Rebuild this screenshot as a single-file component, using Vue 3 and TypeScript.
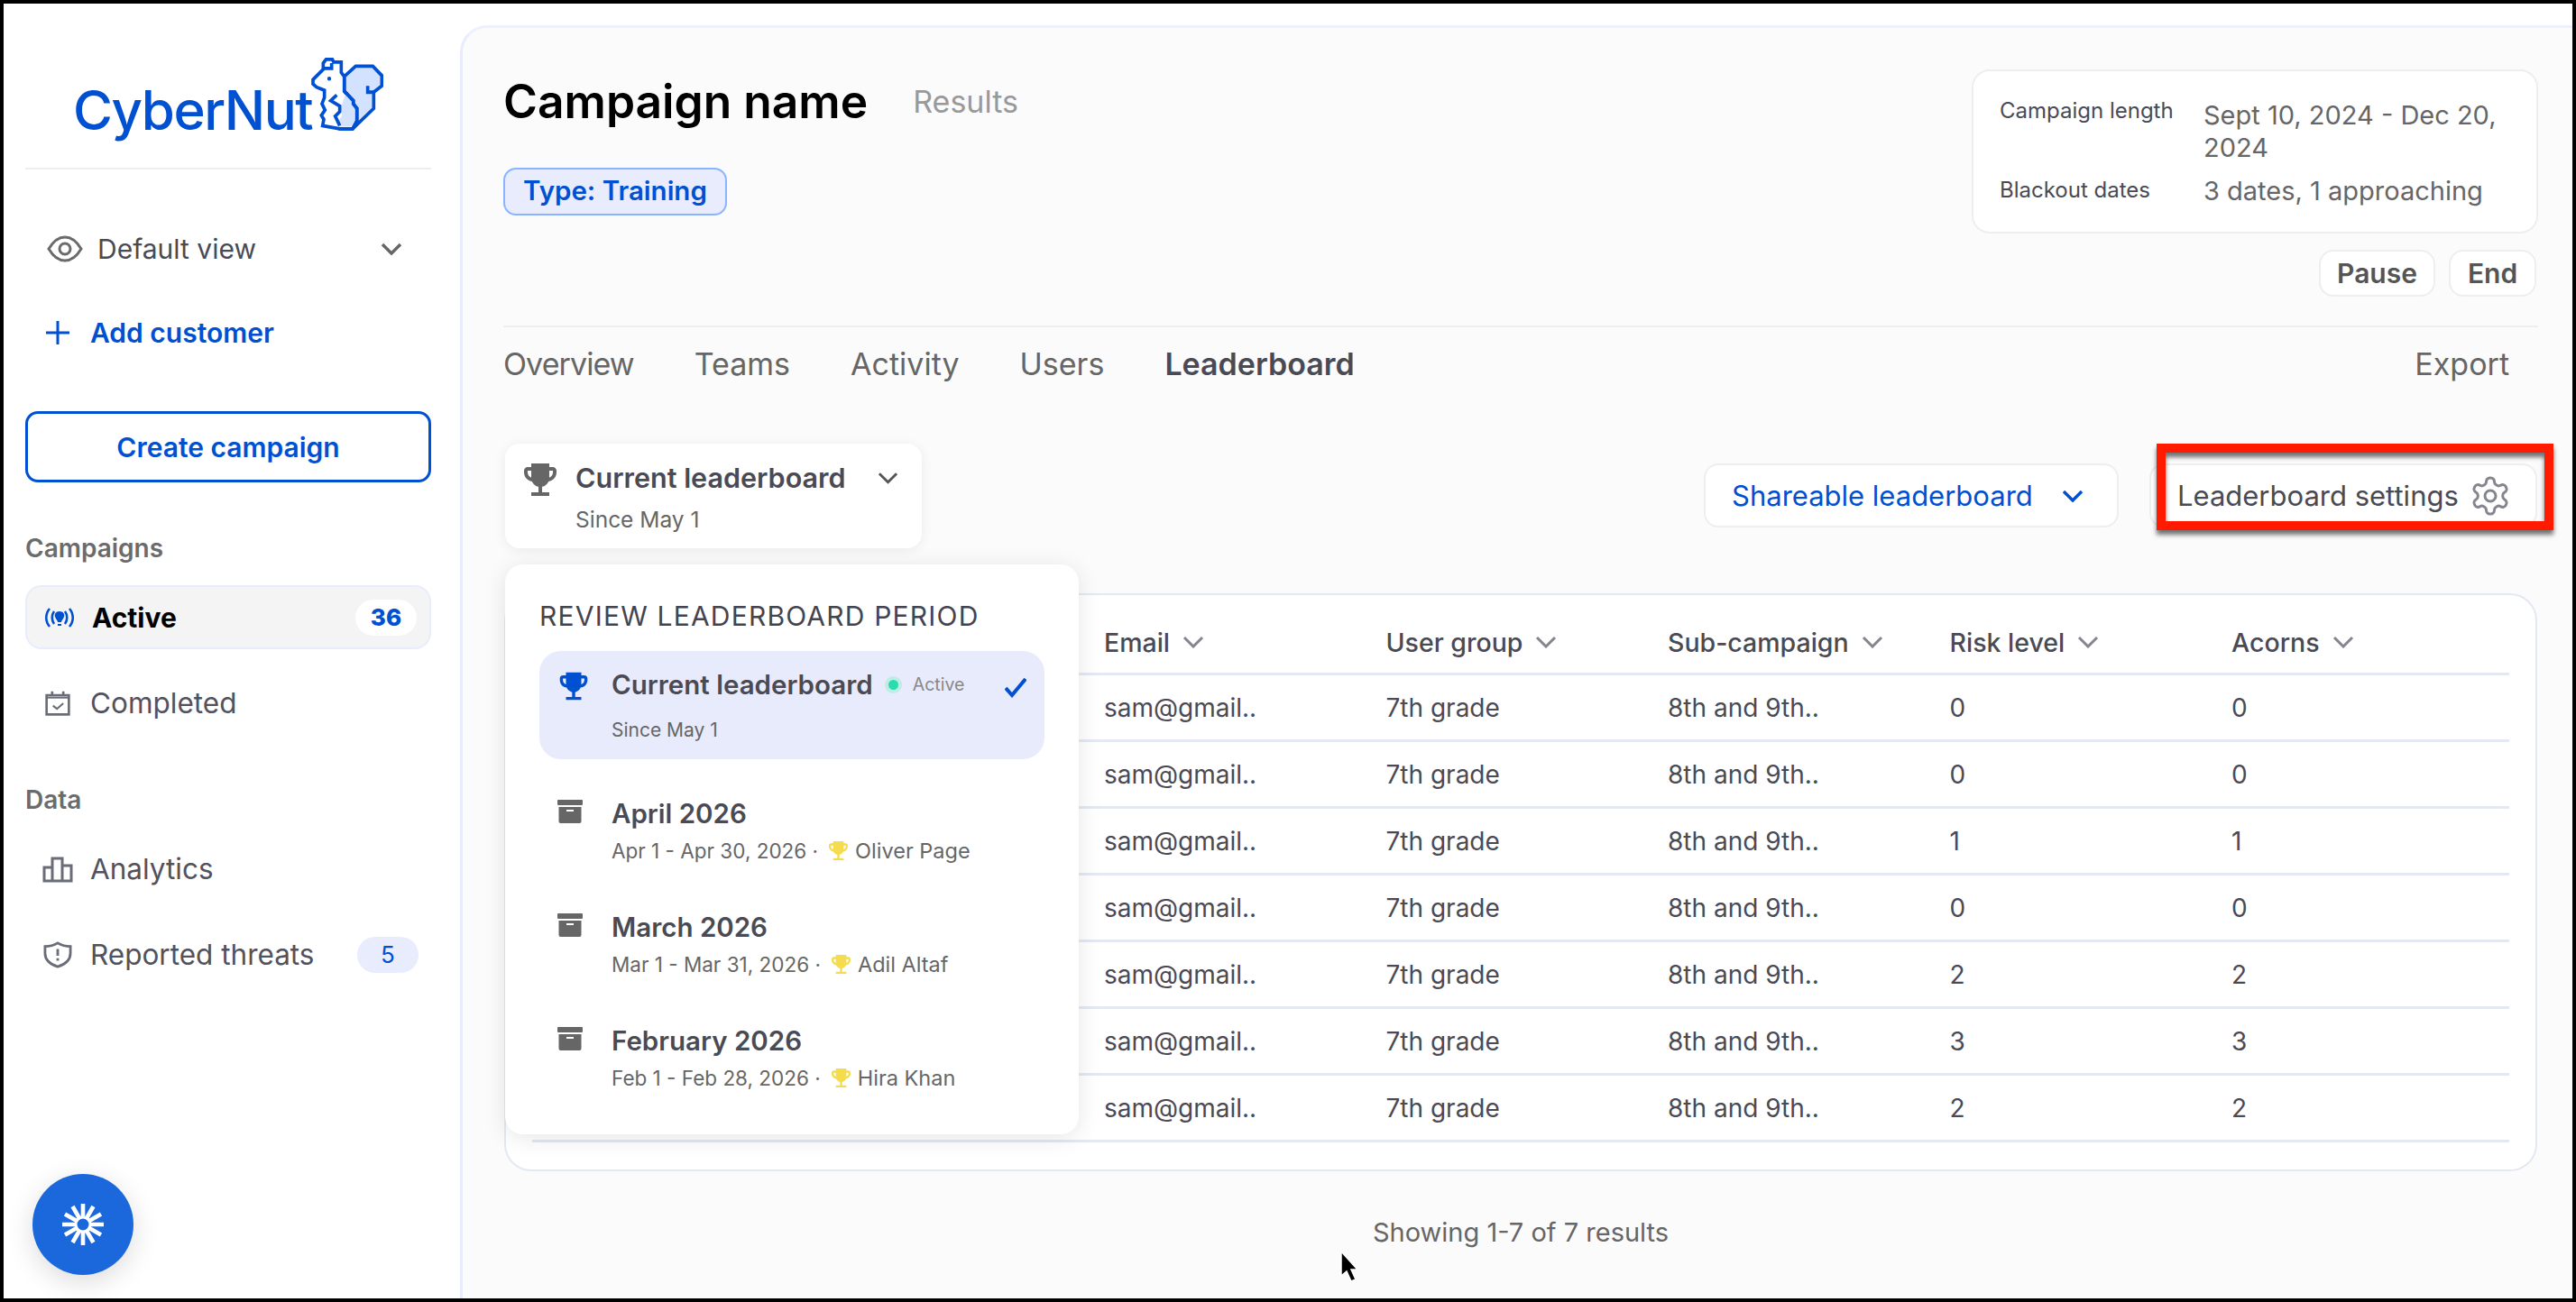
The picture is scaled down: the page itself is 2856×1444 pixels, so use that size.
<script setup lang="ts">
const tabs = ['Overview', 'Teams', 'Activity', 'Users']
const columns = ['Email', 'User group', 'Sub-campaign', 'Risk level', 'Acorns']
const scores = [0, 0, 1, 0, 2, 3, 2]

const periods = [
  { title: 'April 2026', range: 'Apr 1 - Apr 30, 2026 ·', winner: 'Oliver Page' },
  { title: 'March 2026', range: 'Mar 1 - Mar 31, 2026 ·', winner: 'Adil Altaf' },
  { title: 'February 2026', range: 'Feb 1 - Feb 28, 2026 ·', winner: 'Hira Khan' }
]

const trophy =
  'M19 5h-2V3H7v2H5c-1.1 0-2 .9-2 2v1c0 2.55 1.92 4.63 4.39 4.94.63 1.5 1.98 2.63 3.61 2.96V19H7v2h10v-2h-4v-3.1c1.63-.33 2.98-1.46 3.61-2.96C19.08 12.63 21 10.55 21 8V7c0-1.1-.9-2-2-2zM5 8V7h2v3.82C5.84 10.4 5 9.3 5 8zm14 0c0 1.3-.84 2.4-2 2.82V7h2v1z'
</script>

<template>
  <div class="frame">
    <aside class="sidebar">
      <div class="logo">
        <span class="logo-text">CyberNut</span>
        <svg class="squirrel" viewBox="1030 178 240 236" preserveAspectRatio="none" fill="none" stroke="#0050d2" stroke-width="11" stroke-linejoin="miter">
          <path fill="#d3e2ff" d="M1140 238 L1178 205 H1235 L1265 235 V268 L1238 288 V340 L1168 405 H1125 L1112 385 L1128 360 L1120 340 L1140 285 Z" />
          <path fill="#fff" d="M1070 215 V195 L1080 183 H1100 L1105 192 H1130 V225 L1140 238 V285 L1170 315 V325 L1182 340 V380 L1168 405 H1125 L1068 395 L1072 375 L1064 362 L1076 345 L1066 325 L1074 305 V282 L1048 272 L1036 262 V248 Z" />
          <path fill="#d3e2ff" stroke="none" d="M1146 290 L1165 318 V328 L1176 342 V378 L1162 398 H1128 L1118 385 L1133 362 L1128 340 Z" />
          <path d="M1140 285 L1170 315 V325 L1182 340 V380 L1168 405" />
          <path d="M1115 297 L1095 315 L1125 332 V350 L1110 365 L1125 395" />
          <path d="M1072 212 H1098 V195" />
          <path d="M1218 268 V288 H1238" />
          <circle cx="1090" cy="245" r="9" fill="#0050d2" stroke="#fff" stroke-width="5" />
        </svg>
      </div>

      <div class="view-row">
        <svg class="eye" viewBox="0 0 40 30" fill="none" stroke="#6b6b6b" stroke-width="3">
          <path d="M2 15 C8 5 14 2 20 2 S32 5 38 15 C32 25 26 28 20 28 S8 25 2 15 Z" />
          <circle cx="20" cy="15" r="6" />
        </svg>
        <span>Default view</span>
        <svg class="view-chevron" viewBox="0 0 24 14" fill="none" stroke="#666" stroke-width="3.4">
          <path d="M2 2 L12 12 L22 2" />
        </svg>
      </div>

      <div class="add-row">
        <svg class="plus" viewBox="0 0 26 26" fill="none" stroke="#0050d2" stroke-width="3">
          <path d="M13 0 V26 M0 13 H26" />
        </svg>
        <span>Add customer</span>
      </div>

      <button class="create-btn">Create campaign</button>

      <div class="nav-label campaigns-label">Campaigns</div>
      <div class="nav-item active">
        <svg class="nav-icon" viewBox="0 0 34 24" fill="none" stroke="#0050d2" stroke-width="2.6">
          <path d="M6 2 C1 8 1 16 6 22 M11 5 C8 9 8 15 11 19 M28 2 C33 8 33 16 28 22 M23 5 C26 9 26 15 23 19" />
          <path fill="#0050d2" stroke="none" d="M17 5 C21 5 23 8 22 11 C21 14 19 15 19 17 H15 C15 15 13 14 12 11 C11 8 13 5 17 5 Z M15 19 H19 V21 H15 Z" />
        </svg>
        <span>Active</span>
        <span class="count white">36</span>
      </div>
      <div class="nav-item second">
        <svg class="nav-icon" viewBox="0 0 34 34" fill="none" stroke="#6a6c78" stroke-width="3">
          <path d="M3 7 H31 V31 H3 Z" />
          <path d="M10 2 V7 M24 2 V7" />
          <path d="M3 10 H31" stroke-width="2" />
          <path d="M11 20 L16 24 L24 17" stroke-width="2.4" />
        </svg>
        <span>Completed</span>
      </div>

      <div class="nav-label data-label">Data</div>
      <div class="nav-item">
        <svg class="nav-icon" viewBox="0 0 34 30" fill="none" stroke="#6a6c78" stroke-width="3">
          <path d="M2 13 H11 V28 H2 Z M11 3 H22 V28 H11 Z M22 11 H32 V28 H22 Z" />
        </svg>
        <span>Analytics</span>
      </div>
      <div class="nav-item second">
        <svg class="nav-icon" viewBox="0 0 34 32" fill="none" stroke="#6a6c78" stroke-width="3">
          <path d="M17 2 C22 5 27 6 32 6 V14 C32 22 26 27 17 30 C8 27 2 22 2 14 V6 C7 6 12 5 17 2 Z" />
          <path d="M17 9 V17 M17 20 V23" />
        </svg>
        <span>Reported threats</span>
        <span class="count tint">5</span>
      </div>

      <div class="fab">
        <svg viewBox="0 0 48 48" fill="none" stroke="#fff" stroke-width="4.600">
          <path d="M24 1 V47 M1 24 H47 M12.500 4 L35.500 44 M35.500 4 L12.500 44 M4 12.500 L44 35.500 M44 12.500 L4 35.500" />
          <circle cx="24" cy="24" r="8" fill="#1a68dc" stroke="#fff" stroke-width="3" />
        </svg>
      </div>
    </aside>

    <main class="main">
      <header class="head">
        <div class="head-left">
          <div class="title-row">
            <h1>Campaign name</h1>
            <span class="results">Results</span>
          </div>
          <span class="type-tag">Type: Training</span>
        </div>
        <div class="head-right">
          <div class="info-card">
            <div class="info-label">Campaign length</div>
            <div class="info-value">Sept 10, 2024 - Dec 20, 2024</div>
            <div class="info-label lower">Blackout dates</div>
            <div class="info-value lower">3 dates, 1 approaching</div>
          </div>
          <div class="actions">
            <button class="action pause">Pause</button>
            <button class="action end">End</button>
          </div>
        </div>
      </header>

      <nav class="tabs">
        <span v-for="tab in tabs" :key="tab" class="tab">{{ tab }}</span>
        <span class="tab current">Leaderboard</span>
        <span class="tab export">Export</span>
      </nav>

      <section class="toolbar">
        <div class="selector">
          <svg class="selector-trophy" viewBox="2 2 20 20" fill="#666"><path :d="trophy" /></svg>
          <div class="selector-text">
            <div class="selector-name">Current leaderboard</div>
            <div class="selector-since">Since May 1</div>
          </div>
          <svg class="selector-chevron" viewBox="0 0 24 14" fill="none" stroke="#555" stroke-width="3">
            <path d="M2 2 L12 12 L22 2" />
          </svg>
        </div>

        <div class="tool-btns">
          <button class="tool-btn share">
            <span>Shareable leaderboard</span>
            <svg viewBox="0 0 24 14" fill="none" stroke="#0050d2" stroke-width="3.4"><path d="M2 2 L12 12 L22 2" /></svg>
          </button>
          <button class="tool-btn settings">
            <span>Leaderboard settings</span>
            <svg viewBox="0 0 24 24" fill="none" stroke="#85858f" stroke-width="1.5">
              <path d="M12.22 2h-.44a2 2 0 0 0-2 2v.18a2 2 0 0 1-1 1.73l-.43.25a2 2 0 0 1-2 0l-.15-.08a2 2 0 0 0-2.73.73l-.22.38a2 2 0 0 0 .73 2.73l.15.1a2 2 0 0 1 1 1.72v.51a2 2 0 0 1-1 1.74l-.15.09a2 2 0 0 0-.73 2.73l.22.38a2 2 0 0 0 2.73.73l.15-.08a2 2 0 0 1 2 0l.43.25a2 2 0 0 1 1 1.73V20a2 2 0 0 0 2 2h.44a2 2 0 0 0 2-2v-.18a2 2 0 0 1 1-1.73l.43-.25a2 2 0 0 1 2 0l.15.08a2 2 0 0 0 2.73-.73l.22-.39a2 2 0 0 0-.73-2.73l-.15-.08a2 2 0 0 1-1-1.74v-.5a2 2 0 0 1 1-1.74l.15-.09a2 2 0 0 0 .73-2.73l-.22-.38a2 2 0 0 0-2.73-.73l-.15.08a2 2 0 0 1-2 0l-.43-.25a2 2 0 0 1-1-1.73V4a2 2 0 0 0-2-2z" />
              <circle cx="12" cy="12" r="3" />
            </svg>
          </button>
        </div>

        <div class="popup">
          <div class="popup-title">REVIEW LEADERBOARD PERIOD</div>
          <div class="period selected">
            <svg class="period-trophy" viewBox="2 2 20 20" fill="#0050d2"><path :d="trophy" /></svg>
            <div class="period-body">
              <div class="period-name">
                <span>Current leaderboard</span>
                <i class="dot"></i>
                <span class="active-word">Active</span>
              </div>
              <div class="period-sub">Since May 1</div>
            </div>
            <svg class="check" viewBox="0 0 24 24" fill="none" stroke="#0050d2" stroke-width="4">
              <path d="M1 13 L8 21 L23 3" />
            </svg>
          </div>
          <div v-for="period in periods" :key="period.title" class="period">
            <svg class="archive" viewBox="0 0 28 26" fill="#666">
              <rect x="0" y="0" width="28" height="6" rx="1" />
              <path d="M1.5 8 H26.5 V24 Q26.5 26 24.5 26 H3.500 Q1.500 26 1.500 24 Z M10 11 V13 H18 V11 Z" fill-rule="evenodd" />
            </svg>
            <div class="period-body">
              <div class="period-name">{{ period.title }}</div>
              <div class="period-sub">
                <span>{{ period.range }}</span>
                <svg class="mini-trophy" viewBox="3 3 18 18" fill="#f5dc4c"><path :d="trophy" /></svg>
                <span class="winner">{{ period.winner }}</span>
              </div>
            </div>
          </div>
        </div>

        <div class="callout"></div>
      </section>

      <section class="table-card">
        <div class="table-row table-head">
          <span></span>
          <span v-for="col in columns" :key="col" class="th">
            {{ col }}
            <svg viewBox="0 0 24 14" fill="none" stroke="#85858f" stroke-width="3"><path d="M2 2 L12 12 L22 2" /></svg>
          </span>
        </div>
        <div v-for="(score, i) in scores" :key="i" class="table-row">
          <span></span>
          <span>sam@gmail..</span>
          <span>7th grade</span>
          <span>8th and 9th..</span>
          <span>{{ score }}</span>
          <span>{{ score }}</span>
        </div>
      </section>

      <div class="showing">Showing 1-7 of 7 results</div>
    </main>

    <svg class="cursor" viewBox="0 0 22 38">
      <path d="M2 2 V29 L8 24 L13 35 L18 33 L13 22 L20 22 Z" fill="#000" stroke="#fff" stroke-width="1.500" />
    </svg>
  </div>
</template>

<style>
html,
body {
  margin: 0;
  background: #000;
}
</style>

<style scoped>
* {
  box-sizing: border-box;
}

.frame {
  position: relative;
  display: flex;
  width: 2856px;
  height: 1444px;
  border: 4px solid #000;
  background: #fff;
  overflow: hidden;
  font-family: Inter, 'Noto Sans', sans-serif;
  color: #4a4a55;
}

button {
  font-family: inherit;
  cursor: pointer;
}

/* sidebar */
.sidebar {
  display: flex;
  flex-direction: column;
  flex: none;
  width: 506px;
  padding: 0 32px 26px 24px;
}

.logo {
  display: flex;
  flex: none;
  height: 184px;
  padding: 88px 0 0 53px;
  border-bottom: 2px solid #eeeeee;
}

.logo-text {
  font-size: 60px;
  line-height: 60px;
  font-weight: 500;
  letter-spacing: -1.5px;
  color: #0050d2;
}

.squirrel {
  flex: none;
  width: 80px;
  height: 82px;
  margin: -28px 0 0 -1px;
}

.view-row {
  display: flex;
  align-items: center;
  flex: none;
  height: 50px;
  margin-top: 63px;
  padding-left: 24px;
  font-size: 30px;
}

.eye {
  width: 40px;
  height: 30px;
  margin-right: 16px;
}

.view-chevron {
  width: 24px;
  height: 14px;
  margin-left: auto;
  margin-right: 32px;
}

.add-row {
  display: flex;
  align-items: center;
  flex: none;
  height: 50px;
  margin-top: 43px;
  padding-left: 23px;
  font-size: 30px;
  font-weight: 600;
  color: #0050d2;
}

.plus {
  width: 26px;
  height: 26px;
  margin-right: 23px;
}

.create-btn {
  flex: none;
  height: 79px;
  margin-top: 62px;
  border: 3px solid #0050d2;
  border-radius: 14px;
  background: #fff;
  font-size: 30px;
  font-weight: 600;
  color: #0050d2;
}

.nav-label {
  flex: none;
  height: 30px;
  font-size: 28px;
  line-height: 30px;
  font-weight: 600;
  color: #6b6b6b;
}

.campaigns-label {
  margin-top: 58px;
}

.data-label {
  margin-top: 57px;
}

.nav-item {
  display: flex;
  align-items: center;
  flex: none;
  height: 71px;
  margin-top: 26px;
  padding: 0 14px 0 19px;
  font-size: 31.5px;
  color: #52525e;
}

.nav-item.second {
  margin-top: 24px;
}

.nav-item.active {
  border: 2px solid #e8ecfd;
  border-radius: 18px;
  background: #f4f4f4;
  font-size: 30px;
  font-weight: 700;
  color: #000;
}

.nav-icon {
  width: 34px;
  height: 30px;
  margin-right: 19px;
}

.count {
  margin-left: auto;
  width: 68px;
  height: 40px;
  border-radius: 20px;
  font-size: 26px;
  line-height: 40px;
  text-align: center;
  color: #0050d2;
}

.count.white {
  background: #fff;
  font-weight: 800;
}

.count.tint {
  background: #e8ecfd;
}

.fab {
  display: flex;
  align-items: center;
  justify-content: center;
  width: 112px;
  height: 112px;
  margin: auto 0 0 8px;
  border-radius: 50%;
  background: #1a68dc;
  box-shadow: 0 8px 30px rgba(0, 0, 0, 0.14);
}

.fab svg {
  width: 48px;
  height: 48px;
}

/* main panel */
.main {
  flex: 1;
  min-width: 0;
  margin-top: 24px;
  padding: 46px 38px 0 45px;
  border-top: 3px solid #eef0fb;
  border-left: 3px solid #e8ecfd;
  border-top-left-radius: 30px;
  background: #fbfbfc;
}

.head {
  display: flex;
  justify-content: space-between;
  height: 284px;
}

.title-row {
  display: flex;
  align-items: center;
  height: 70px;
}

h1 {
  margin: 0;
  font-size: 51.5px;
  font-weight: 600;
  color: #000;
}

.results {
  margin-left: 50px;
  font-size: 34px;
  color: #999;
}

.type-tag {
  display: inline-block;
  height: 53px;
  margin-top: 39px;
  padding: 0 20px;
  border: 2px solid #8ab4ff;
  border-radius: 14px;
  background: #e8ecfd;
  font-size: 29.5px;
  line-height: 47px;
  font-weight: 600;
  color: #0050d2;
}

.head-right {
  width: 628px;
}

.info-card {
  display: grid;
  grid-template-columns: 226px 334px;
  align-content: start;
  height: 182px;
  padding: 31px 0 0 29px;
  border: 2px solid #eeeeee;
  border-radius: 20px;
  background: #fff;
}

.info-label {
  font-size: 24px;
  line-height: 26px;
  color: #4a4a55;
}

.info-value {
  font-size: 29px;
  line-height: 36px;
  color: #666;
}

.info-label.lower {
  margin-top: 16px;
}

.info-value.lower {
  margin-top: 12px;
}

.actions {
  display: flex;
  justify-content: flex-end;
  gap: 15px;
  margin: 18px 2px 0 0;
}

.action {
  height: 52px;
  border: 2px solid #eeeeee;
  border-radius: 16px;
  background: #fff;
  font-size: 30px;
  font-weight: 600;
  color: #555;
}

.pause {
  width: 129px;
}

.end {
  width: 97px;
}

.tabs {
  display: flex;
  align-items: center;
  gap: 67px;
  height: 82px;
  border-top: 2px solid #eeeeee;
  font-size: 34px;
  color: #666;
}

.tab:first-child {
  letter-spacing: -0.9px;
}

.tab.current {
  font-weight: 600;
  color: #4a4a55;
}

.tab.export {
  margin-left: auto;
  margin-right: 32px;
}

.toolbar {
  position: relative;
  display: flex;
  height: 116px;
  margin-top: 49px;
}

.selector {
  display: flex;
  width: 462px;
  height: 116px;
  margin-left: 2px;
  padding: 20px 26px 0 18px;
  border-radius: 16px;
  background: #fff;
  box-shadow: 0 2px 14px rgba(0, 0, 0, 0.07);
}

.selector-trophy {
  width: 42px;
  height: 40px;
}

.selector-text {
  margin-left: 18px;
}

.selector-name {
  height: 36px;
  font-size: 30.5px;
  line-height: 36px;
  font-weight: 600;
}

.selector-since {
  margin-top: 13px;
  font-size: 24.500px;
  line-height: 30px;
  color: #666;
}

.selector-chevron {
  width: 23px;
  height: 14px;
  margin: 11px 0 0 auto;
}

.tool-btns {
  display: flex;
  gap: 34px;
  margin: 22px 1px 0 auto;
}

.tool-btn {
  display: flex;
  align-items: center;
  height: 71px;
  border: 2px solid #eeeeee;
  border-radius: 16px;
  background: #fff;
  font-size: 31px;
}

.share {
  width: 460px;
  padding: 0 37px 0 29px;
  color: #0050d2;
}

.share svg {
  width: 24px;
  height: 14px;
  margin-left: auto;
}

.settings {
  width: 430px;
  padding: 0 26px 0 29px;
  color: #4a4a55;
}

.settings svg {
  width: 48px;
  height: 48px;
  margin-left: auto;
}

/* period dropdown */
.popup {
  position: absolute;
  top: 134px;
  left: 2px;
  z-index: 3;
  width: 636px;
  height: 632px;
  padding: 39px 38px 0 38px;
  border-radius: 20px;
  background: #fff;
  box-shadow: 0 4px 26px rgba(0, 0, 0, 0.1);
}

.popup-title {
  height: 36px;
  font-size: 30px;
  line-height: 36px;
  letter-spacing: 1.2px;
  color: #444450;
  white-space: nowrap;
}

.period {
  display: flex;
  align-items: flex-start;
  height: 126px;
  padding: 22px 20px 0 20px;
  border-radius: 24px;
}

.period.selected {
  height: 120px;
  margin: 21px 0 23px;
  background: #e8ebfc;
}

.period-trophy {
  width: 36px;
  height: 34px;
  margin-right: 24px;
}

.archive {
  width: 28px;
  height: 26px;
  margin-right: 32px;
}

.period-body {
  flex: 1;
  margin-top: -3px;
}

.period-name {
  display: flex;
  align-items: center;
  height: 36px;
  font-size: 29.5px;
  font-weight: 600;
}

.period-sub {
  display: flex;
  align-items: center;
  height: 30px;
  margin-top: 8px;
  font-size: 22.5px;
  color: #666;
}

.selected .period-sub {
  margin-top: 17px;
  font-size: 21px;
}

.dot {
  width: 19px;
  height: 19px;
  margin-left: 13px;
  border: 4px solid #bfece4;
  border-radius: 50%;
  background: #2adbb0;
}

.active-word {
  margin-left: 12px;
  font-size: 19.5px;
  font-weight: 400;
  color: #888;
}

.check {
  width: 24px;
  height: 24px;
  margin-top: 6px;
}

.mini-trophy {
  width: 21px;
  height: 23px;
  margin: 0 8px 0 12px;
}

.winner {
  font-size: 23.5px;
}

/* table */
.table-card {
  height: 641px;
  margin: 50px 1px 0 1px;
  padding: 0 29px;
  border: 2px solid #e3e8f2;
  border-radius: 30px;
  background: #fff;
}

.table-row {
  display: grid;
  grid-template-columns: 634px repeat(4, 312.500px) 1fr;
  align-items: center;
  height: 74px;
  border-bottom: 3px solid #e3e8f2;
  font-size: 28px;
}

.table-head {
  height: 89px;
  padding-top: 18px;
}

.th {
  display: flex;
  align-items: center;
  font-weight: 500;
  font-size: 28.5px;
}

.th svg {
  width: 24px;
  height: 14px;
  margin-left: 14px;
}

.showing {
  margin-top: 48px;
  font-size: 29px;
  line-height: 40px;
  text-align: center;
  color: #666;
}

/* screenshot annotations */
.callout {
  position: absolute;
  top: 0;
  left: 1833px;
  z-index: 4;
  width: 440px;
  height: 96px;
  border: 10px solid #ff1a00;
  box-shadow: 0 5px 5px rgba(0, 0, 0, 0.55), inset 0 5px 5px rgba(0, 0, 0, 0.55);
}

.cursor {
  position: absolute;
  top: 1382px;
  left: 1481px;
  z-index: 5;
  width: 22px;
  height: 38px;
}
</style>
